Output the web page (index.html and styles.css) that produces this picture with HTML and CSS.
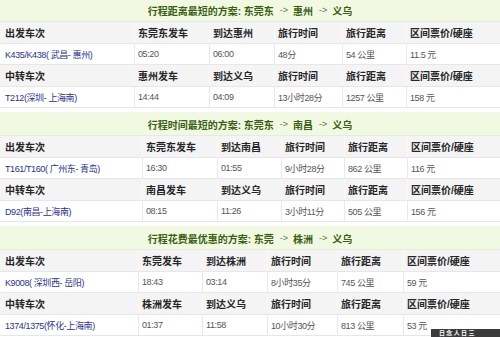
FILE: index.html
```html
<!DOCTYPE html>
<html lang="zh-CN">
<head>
<meta charset="utf-8">
<title>中转方案</title>
<link rel="stylesheet" href="styles.css">
</head>
<body>
<div class="page">
  <section class="plan p1">
    <div class="plan-title">行程距离最短的方案: <b>东莞东</b><span class="arr">-&gt;</span><b>惠州</b><span class="arr">-&gt;</span><b>义乌</b></div>
    <div class="row head"><div class="cell first">出发车次</div><div class="cell">东莞东发车</div><div class="cell">到达惠州</div><div class="cell">旅行时间</div><div class="cell">旅行距离</div><div class="cell">区间票价/硬座</div></div>
    <div class="row data"><div class="cell first"><a class="train">K435/K438( 武昌- 惠州)</a></div><div class="cell">05:20</div><div class="cell">06:00</div><div class="cell">48分</div><div class="cell">54 公里</div><div class="cell">11.5 元</div></div>
    <div class="row head"><div class="cell first">中转车次</div><div class="cell">惠州发车</div><div class="cell">到达义乌</div><div class="cell">旅行时间</div><div class="cell">旅行距离</div><div class="cell">区间票价/硬座</div></div>
    <div class="row data"><div class="cell first"><a class="train">T212(深圳- 上海南)</a></div><div class="cell">14:44</div><div class="cell">04:09</div><div class="cell">13小时28分</div><div class="cell">1257 公里</div><div class="cell">158 元</div></div>
  </section>

  <section class="plan p2">
    <div class="plan-title">行程时间最短的方案: <b>东莞东</b><span class="arr">-&gt;</span><b>南昌</b><span class="arr">-&gt;</span><b>义乌</b></div>
    <div class="row head"><div class="cell first">出发车次</div><div class="cell">东莞东发车</div><div class="cell">到达南昌</div><div class="cell">旅行时间</div><div class="cell">旅行距离</div><div class="cell">区间票价/硬座</div></div>
    <div class="row data"><div class="cell first"><a class="train">T161/T160( 广州东- 青岛)</a></div><div class="cell">16:30</div><div class="cell">01:55</div><div class="cell">9小时28分</div><div class="cell">862 公里</div><div class="cell">116 元</div></div>
    <div class="row head"><div class="cell first">中转车次</div><div class="cell">南昌发车</div><div class="cell">到达义乌</div><div class="cell">旅行时间</div><div class="cell">旅行距离</div><div class="cell">区间票价/硬座</div></div>
    <div class="row data"><div class="cell first"><a class="train">D92(南昌-上海南)</a></div><div class="cell">08:15</div><div class="cell">11:26</div><div class="cell">3小时11分</div><div class="cell">505 公里</div><div class="cell">156 元</div></div>
  </section>

  <section class="plan p3">
    <div class="plan-title">行程花费最优惠的方案: <b>东莞</b><span class="arr">-&gt;</span><b>株洲</b><span class="arr">-&gt;</span><b>义乌</b></div>
    <div class="row head"><div class="cell first">出发车次</div><div class="cell">东莞发车</div><div class="cell">到达株洲</div><div class="cell">旅行时间</div><div class="cell">旅行距离</div><div class="cell">区间票价/硬座</div></div>
    <div class="row data"><div class="cell first"><a class="train">K9008( 深圳西- 岳阳)</a></div><div class="cell">18:43</div><div class="cell">03:14</div><div class="cell">8小时35分</div><div class="cell">745 公里</div><div class="cell">59 元</div></div>
    <div class="row head"><div class="cell first">中转车次</div><div class="cell">株洲发车</div><div class="cell">到达义乌</div><div class="cell">旅行时间</div><div class="cell">旅行距离</div><div class="cell">区间票价/硬座</div></div>
    <div class="row data"><div class="cell first"><a class="train">1374/1375(怀化-上海南)</a></div><div class="cell">01:37</div><div class="cell">11:58</div><div class="cell">10小时30分</div><div class="cell">813 公里</div><div class="cell">53 元</div></div>
  </section>
</div>
<div class="toolbar">日 念 人 日 三</div>
</body>
</html>
```
FILE: styles.css
```css
html, body {
  margin: 0;
  padding: 0;
  background: #ffffff;
  overflow: hidden;
}
body {
  font-family: "Liberation Sans", "Noto Sans CJK SC", sans-serif;
  width: 500px;
  height: 337px;
  position: relative;
}
.page {
  margin-top: -2px;
}
.plan {
  margin-bottom: 4px;
}
.plan-title {
  height: 24px;
  box-sizing: border-box;
  background: #f1f9e3;
  border-bottom: 1px solid #e6ecdc;
  display: flex;
  align-items: center;
  justify-content: center;
  font-size: 10px;
  font-weight: bold;
  color: #395f12;
  white-space: pre;
  padding-top: 1px;
}
.plan-title b {
  font-weight: bold;
}
.plan-title .arr {
  font-weight: normal;
  font-size: 9px;
  color: #5b7440;
  margin: 0 5px 0 6px;
}
.row {
  display: grid;
  box-sizing: border-box;
  border-bottom: 1px solid #e7e7e7;
}
.p1 .row { grid-template-columns: 135px 75px 65px 68px 64px 1fr; }
.p2 .row { grid-template-columns: 143px 75px 64px 63px 63px 1fr; }
.p3 .row { grid-template-columns: 139px 64px 65px 70px 66px 1fr; }
.row.head {
  height: 22px;
  background: #f4f4f4;
  font-size: 10px;
  font-weight: bold;
  color: #262626;
}
.row.data {
  height: 21px;
  background: #ffffff;
  font-size: 9px;
  color: #555555;
  letter-spacing: -0.4px;
}
.cell {
  display: flex;
  align-items: center;
  padding-left: 3px;
  border-right: 1px solid #e9e9e9;
  white-space: nowrap;
  overflow: hidden;
}
.row.head .cell {
  border-right-color: #f8f8f8;
}
.cell:last-child {
  border-right: none;
}
.cell.first {
  padding-left: 5px;
}
.train {
  color: #2c3294;
  text-decoration: none;
}
.toolbar {
  position: absolute;
  left: 431px;
  top: 329px;
  width: 69px;
  height: 8px;
  background: #3b3b3b;
  color: #ffffff;
  font-size: 6px;
  line-height: 8px;
  font-weight: bold;
  padding: 0 0 0 8px;
  box-sizing: border-box;
  white-space: nowrap;
  overflow: hidden;
  font-family: "Noto Sans CJK SC", sans-serif;
}
```
